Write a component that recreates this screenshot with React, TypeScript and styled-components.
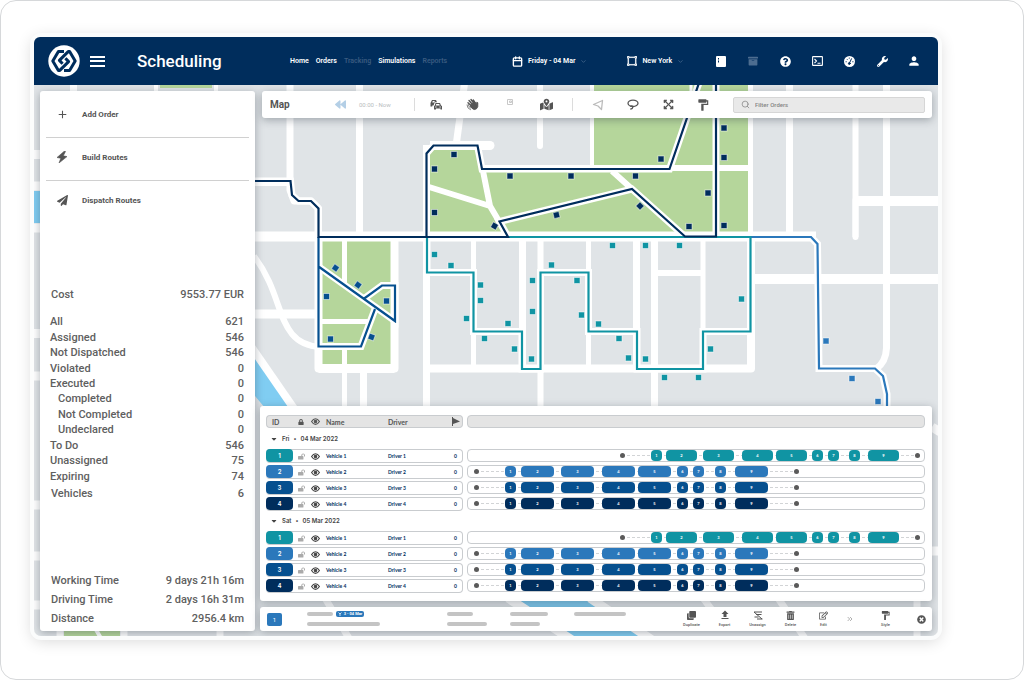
import React from "react";
import styled, { createGlobalStyle, css } from "styled-components";
import {
  FaPaperPlane, FaMapMarkedAlt, FaQuestionCircle, FaWrench, FaLock, FaLockOpen,
  FaTrashAlt, FaRegEdit, FaTimesCircle, FaBackward, FaCaretDown, FaClone,
  FaArchive, FaExpandArrowsAlt,
} from "react-icons/fa";
import { MdFormatPaint, MdAdd, MdUpload, MdPerson } from "react-icons/md";
import { BsBoundingBoxCircles } from "react-icons/bs";
import { Calendar, Search, ChevronsRight, ChevronDown } from "lucide-react";

const navy = "#002d5c";
const teal = "#1094a3";
const blue = "#2b78bb";
const mid = "#06508f";
const ink = "#555";

const Global = createGlobalStyle`
  *, *::before, *::after { box-sizing: border-box; }
  body { margin: 0; background: #fff; font-family: Roboto, "Liberation Sans", sans-serif; color: ${ink}; }
  button, input, select { font: inherit; color: inherit; }
  button { border: 0; padding: 0; background: none; cursor: pointer; }
  a { color: inherit; text-decoration: none; }
  svg { display: block; flex: none; }
`;

const Frame = styled.div`
  min-height: 100vh;
  display: flex;
  padding: 36px 85px 43px 33px;
  border: 1px solid #d6d8da;
  border-radius: 16px;
`;
const Window = styled.main`
  flex: 1;
  min-width: 0;
  display: flex;
  flex-direction: column;
  border-radius: 7px;
  box-shadow: 0 0 0 4px #fbfcfc, 0 3px 16px 2px rgba(0, 0, 0, 0.16);
`;

/* Header */
const Header = styled.header`
  height: 48px;
  display: grid;
  grid-template-columns: 256px 222px 198px 1fr;
  align-items: center;
  background: ${navy};
  border-radius: 6px 6px 0 0;
  color: #fff;
  font-size: 7px;
  font-weight: 600;
`;
const Brand = styled.div`
  display: flex;
  align-items: center;
  padding-left: 14px;
`;
const MenuButton = styled.button`
  width: 15px;
  height: 11px;
  margin: 0 32px 0 10px;
  border-top: 2px solid #fff;
  border-bottom: 2px solid #fff;
  background: linear-gradient(#fff, #fff) center / 100% 2px no-repeat;
`;
const Title = styled.h1`
  margin: 0;
  font-size: 17px;
  line-height: 20px;
  font-weight: 500;
`;
const Nav = styled.nav`
  display: flex;
  gap: 7px;
`;
const NavLink = styled.a<{ $dim?: boolean }>`
  color: ${(p) => (p.$dim ? "#3a5b80" : "#fff")};
`;
const Pickers = styled.div`
  display: flex;
  gap: 40px;
`;
const Picker = styled.button`
  display: flex;
  align-items: center;
  white-space: nowrap;
  gap: 5px;
`;
const Tools = styled.div`
  display: flex;
  justify-content: space-between;
  padding: 0 17px 0 4px;
`;
const IconButton = styled.button<{ $color?: string }>`
  display: flex;
  align-items: center;
  justify-content: center;
  width: 13px;
  height: 13px;
  color: ${(p) => p.$color ?? "inherit"};
`;

/* Workspace: the map with panels over it */
const Stage = styled.div`
  flex: 1;
  position: relative;
  display: grid;
  grid-template-columns: 215px minmax(0, 1fr);
  gap: 5px;
  padding: 6px 6px 5px;
  border-radius: 0 0 7px 7px;
  overflow: hidden;
`;
const MapCanvas = styled.svg`
  position: absolute;
  inset: 0;
  width: 100%;
  height: 100%;
`;
const panel = css`
  position: relative;
  background: #fff;
  border-radius: 3px;
  box-shadow: 0 2px 9px rgba(40, 50, 60, 0.36);
`;
const SidePanel = styled.aside`
  ${panel}
  display: flex;
  flex-direction: column;
  padding: 4px 6px 3px;
`;
const Action = styled.button`
  display: grid;
  grid-template-columns: 32px 1fr;
  align-items: center;
  justify-items: center;
  gap: 4px;
  height: 43px;
  padding-bottom: 4px;
  font-size: 8px;
  font-weight: 700;
  border-bottom: 1px solid #d0d0d0;
  span { justify-self: start; }
  &:last-child { border-color: transparent; }
`;
const Actions = styled.div`
  display: grid;
`;
const Figures = styled.dl<{ $row: number }>`
  display: grid;
  grid-auto-rows: ${(p) => p.$row}px;
  margin: 0 5px;
  font-size: 11px;
  font-weight: 500;
  color: #606060;
  align-items: center;
`;
const Counts = styled(Figures)`
  height: 170px;
  margin: 12px 5px 0 4px;
  grid-auto-rows: 1fr;
`;
const Figure = styled.div<{ $indent?: boolean }>`
  display: flex;
  justify-content: space-between;
  padding-left: ${(p) => (p.$indent ? 8 : 0)}px;
  line-height: 14px;
  dd { margin: 0; }
`;
const CostBlock = styled.div`
  margin: auto 0;
  padding-bottom: 5px;
`;

const Main = styled.div`
  display: flex;
  flex-direction: column;
  min-width: 0;
`;
const MapBar = styled.div`
  ${panel}
  display: flex;
  align-items: center;
  height: 27px;
  margin-left: 2px;
  padding: 0 7px 0 8px;
`;
const MapTitle = styled.h2`
  margin: 0;
  width: 64px;
  font-size: 10px;
  line-height: 14px;
  font-weight: 700;
`;
const Clock = styled.span`
  width: 67px;
  padding-left: 12px;
  font-size: 6px;
  color: #b9bcc0;
`;
const MapTools = styled.div<{ $width: number; $inset: number }>`
  display: flex;
  align-items: center;
  justify-content: space-between;
  flex: 0 1 ${(p) => p.$width}px;
  padding: 0 19px 0 ${(p) => p.$inset}px;
  border-left: 1px solid #dcdcdc;
`;
const SearchBox = styled.label`
  flex: 1;
  display: flex;
  align-items: center;
  gap: 5px;
  height: 16px;
  margin-left: 4px;
  padding: 0 7px;
  background: #e9e9e9;
  border: 1px solid #d6d6d6;
  border-radius: 2px;
  color: #858585;
  input {
    flex: 1;
    min-width: 0;
    padding: 0;
    border: 0;
    outline: 0;
    background: none;
    font-size: 6px;
    font-weight: 500;
  }
  input::placeholder { color: #858585; opacity: 1; }
`;

/* Schedule */
const Schedule = styled.section`
  ${panel}
  margin-top: auto;
  padding: 9px 7px 9px 6px;
  font-family: Lato, "Liberation Sans", sans-serif;
`;
const Table = styled.table`
  display: block;
  thead, tbody { display: block; }
`;
const Row = styled.tr`
  display: grid;
  grid-template-columns: 28px 14px 14px 62px 62px 17px minmax(0, 1fr);
  height: 13px;
  margin-bottom: 3px;
  &:last-child { margin-bottom: 0; }
`;
const Cell = styled.td<{ $first?: boolean; $last?: boolean; $pad?: number }>`
  display: flex;
  align-items: center;
  padding: 0 0 0 ${(p) => p.$pad ?? 0}px;
  border: solid #c9cccf;
  border-width: 1px ${(p) => (p.$last ? 1 : 0)}px 1px ${(p) => (p.$first ? 1 : 0)}px;
  border-radius: ${(p) => (p.$first ? "4px 0 0 4px" : p.$last ? "0 4px 4px 0" : 0)};
  font-size: 5px;
  line-height: 6px;
  font-weight: 700;
  color: ${navy};
  white-space: nowrap;
`;
const HeadCell = styled(Cell)`
  background: #e4e4e4;
  font-size: 7px;
  line-height: 8px;
  color: ${ink};
`;
const IconCell = styled(Cell)<{ $muted?: boolean }>`
  justify-content: center;
  color: ${(p) => (p.$muted ? "#aaa" : "#444")};
`;
const IconHead = styled(HeadCell)`
  justify-content: center;
`;
const TrackCell = styled.td`
  padding: 0 0 0 4px;
`;
const TrackHead = styled.th`
  padding: 0 0 0 4px;
`;
const Track = styled.div<{ $filled?: boolean }>`
  display: flex;
  align-items: center;
  height: 13px;
  border: 1px solid #c9cccf;
  border-radius: 4px;
  background: ${(p) => (p.$filled ? "#e4e4e4" : "#fff")};
`;
const IdCell = styled.td`
  padding: 0;
  border: solid #c9cccf;
  border-width: 1px 0;
  border-radius: 4px 0 0 4px;
`;
const IdTag = styled.div<{ $color: string }>`
  width: 27px;
  height: 13px;
  margin-top: -1px;
  border-radius: 4px;
  background: ${(p) => p.$color};
  color: #fff;
  font-family: Inter, "Liberation Sans", sans-serif;
  font-size: 6px;
  line-height: 13px;
  font-weight: 600;
  text-align: center;
`;
const DateCell = styled.th`
  display: flex;
  align-items: center;
  gap: 4px;
  height: 21px;
  padding: 0 0 0 4px;
  font-family: Inter, "Liberation Sans", sans-serif;
  font-size: 6px;
  line-height: 8px;
  font-weight: 600;
  color: #444;
`;
const DateRow = styled.tr`
  display: block;
`;
const Stop = styled.span<{ $w: number; $color: string }>`
  flex: ${(p) => p.$w} 1 0;
  min-width: 0;
  height: 11px;
  border-radius: 4px;
  background: ${(p) => p.$color};
  color: #fff;
  font-size: 4px;
  line-height: 11px;
  font-weight: 700;
  text-align: center;
`;
const Gap = styled.span<{ $w: number; $line?: boolean }>`
  flex: ${(p) => p.$w} 1 0;
  min-width: 0;
  height: 1px;
  background: ${(p) =>
    p.$line ? "repeating-linear-gradient(90deg, transparent 0 2px, #d2d4d6 2px 5px)" : "none"};
`;
const Depot = styled.span`
  flex: 0 0 5px;
  height: 5px;
  border-radius: 50%;
  background: #5a5a5a;
  box-shadow: 0 0 0 1px #fff;
`;

/* Bottom bar */
const BottomBar = styled.footer`
  ${panel}
  display: flex;
  align-items: center;
  height: 24px;
  margin-top: 6px;
  padding: 0 6px 0 7px;
`;
const RouteButton = styled.button`
  width: 15px;
  height: 13px;
  margin-right: 25px;
  border-radius: 2px;
  background: ${blue};
  color: #fff;
  font-size: 6px;
`;
const Lines = styled.div<{ $w: number }>`
  display: grid;
  align-content: start;
  gap: 4px;
  height: 16px;
  flex: 0 1 ${(p) => p.$w}px;
  min-width: 0;
`;
const LineRow = styled.div`
  display: flex;
  align-items: center;
  gap: 3px;
  height: 6px;
`;
const Line = styled.span<{ $w: number }>`
  width: ${(p) => p.$w}px;
  height: 4px;
  border-radius: 2px;
  background: #c4c4c4;
`;
const Chip = styled.span`
  display: flex;
  align-items: center;
  justify-content: center;
  gap: 2px;
  width: 28px;
  height: 6px;
  border-radius: 2px;
  background: ${blue};
  color: #fff;
  font-size: 4px;
  line-height: 6px;
  font-weight: 700;
  white-space: nowrap;
`;
const Commands = styled.div`
  display: flex;
  margin-left: auto;
  align-items: center;
`;
const Command = styled.button`
  display: grid;
  justify-items: center;
  align-items: center;
  grid-template-rows: 10px 6px;
  gap: 2px;
  width: 33px;
  font-size: 4px;
  line-height: 6px;
  font-weight: 500;
`;
const More = styled.button`
  width: 19px;
  margin-right: 10px;
  display: grid;
  justify-items: center;
  color: #888;
`;
const Close = styled.button`
  margin-left: 15px;
`;

const Logo = () => (
  <svg width="32" height="32" viewBox="-16 -16 32 32" aria-label="Logo">
    <circle r="15.7" fill="#fff" />
    <g fill="none" stroke={navy} strokeWidth="3" strokeLinejoin="round">
      <path d="M0-9.6H-5.6L-11.2 0-5.6 9.4H-4.2L4.6.6 1.400-2.800" />
      <path d="M0 9.6H5.6L11.2 0 5.6-9.4H4.2L-4.6-.6-1.400 2.800" />
    </g>
  </svg>
);

const Cars = () => (
  <svg width="12" height="11" viewBox="0 0 24 22" fill="currentColor">
    <path fillRule="evenodd" d="M4 2h8l2 4.500H9.500L7 13H4.500v2H1V8zM5.500 4L4.500 7h4l1-3z" />
    <path fillRule="evenodd" d="M11 8h9l2 5 2 1v7h-3v-2h-9v2H8v-7l1.500-1zM12.500 10l-1 3h8l-1-3zM10.500 15v2h2.500v-2zM19 15v2h2.500v-2z" />
  </svg>
);

const Hand = () => (
  <svg width="13" height="13" viewBox="0 0 26 26" fill="none" stroke="currentColor" strokeWidth="2.800" strokeLinecap="round">
    <path d="M13 13L6 5M16 11L10 3M18.500 10L14.500 4M11 16L4 9.500" />
    <path d="M11 11.500L18 8.500 21.500 13V8.500L23.500 9.500V17Q22 23 16.500 23 12 22 9 17z" fill="currentColor" strokeWidth="2" strokeLinejoin="round" />
    <path d="M2 14Q2 21 9 23.500M4.500 13Q5 18 9.500 20.500" strokeWidth="1.500" />
  </svg>
);

const Ledger = () => (
  <svg width="10" height="12" viewBox="0 0 10 12">
    <rect x="0" y="1" width="10" height="11" rx="1" fill="#fff" />
    <path d="M2.500 3v1.500M2.500 5.500v2" stroke={navy} strokeWidth="1" />
  </svg>
);

const Terminal = () => (
  <svg width="11" height="10" viewBox="0 0 22 20" fill="none" stroke="currentColor" strokeWidth="2.200">
    <rect x="1.200" y="1.200" width="19.600" height="17.600" rx="1" />
    <path d="M5 6l4 4-4 4M11 14.500h6" />
  </svg>
);

const Gauge = () => (
  <svg width="11" height="11" viewBox="0 0 22 22">
    <circle cx="11" cy="11" r="11" fill="currentColor" />
    <g stroke={navy} strokeWidth="2" strokeLinecap="round" fill={navy}>
      <path d="M15 5.500L11 14" />
      <circle cx="10.600" cy="15" r="1.800" />
      <path d="M4 11.500h.6M6 6.500l.4.400M10.500 4v.5M17.500 11.500h.6" />
    </g>
  </svg>
);

const Bolt = () => (
  <svg width="12" height="12" viewBox="0 0 12 12" fill="currentColor">
    <path d="M8.500 0L1 6.500 4.800 7.300 3 12 11 5.600 7.300 4.800 9.500.500z" stroke="currentColor" strokeWidth=".6" />
  </svg>
);

const Eye = () => (
  <svg width="9" height="7" viewBox="0 0 16 12" fill="none" stroke="currentColor" strokeWidth="2">
    <path d="M1 6Q4 1 8 1t7 5q-3 5-7 5T1 6z" />
    <circle cx="8" cy="6" r="2.200" fill="currentColor" />
  </svg>
);

const Pennant = () => (
  <svg width="8" height="9" viewBox="0 0 8 9">
    <path d="M.5 0v9" stroke="currentColor" />
    <path d="M1 1L8 4.500 1 7z" fill="currentColor" />
  </svg>
);

const SendOutline = () => (
  <svg width="12" height="12" viewBox="0 0 12 12" fill="none" stroke="currentColor" strokeWidth="1.300" strokeLinejoin="round">
    <path d="M10.500 1.500L1.500 5.500 6 7 9.500 10.500z" />
  </svg>
);

const LassoIcon = () => (
  <svg width="12" height="11" viewBox="0 0 12 11" fill="none" stroke="currentColor" strokeWidth="1.300" strokeLinecap="round">
    <ellipse cx="6" cy="4.300" rx="5" ry="3.200" />
    <path d="M3.500 7.200Q6 6.500 5.800 8.200T3.800 10" />
  </svg>
);

const NoteIcon = () => (
  <svg width="6" height="12" viewBox="0 0 6 12" fill="none" stroke="currentColor">
    <path d="M.5.500h5v5h-5zM2.500 2h2v1.500h-2z" />
  </svg>
);

const Unassign = () => (
  <svg width="10" height="9" viewBox="0 0 20 18" fill="none" stroke="currentColor" strokeWidth="2">
    <path d="M2 2h16M6 7h11M3 12h8M8 16h11M2 2l16 14" />
  </svg>
);

const Branch = () => (
  <svg width="4" height="4" viewBox="0 0 8 8" fill="none" stroke="currentColor" strokeWidth="1.500">
    <path d="M1 1l3 3 3-3M4 4v4" />
  </svg>
);

/* Streets: path data and stroke width */
const streets: [string, number][] = [
  ["M290 80V190L294 201H311L318 208V237", 7],
  ["M254 182H290", 8],
  ["M254 236.500H816", 10],
  ["M359.500 80V236", 7],
  ["M465 80L456 146", 7],
  ["M430 145.500H490", 9],
  ["M540 80V146", 6],
  ["M592 80V168", 4],
  ["M482 168H750", 6],
  ["M750.500 80V240", 5],
  ["M789.500 80V236", 7],
  ["M855.500 80V237", 6],
  ["M886.500 80V348Q886 362 876 369", 7],
  ["M858 201H940", 10],
  ["M752 279H940", 10],
  ["M318.500 236V368.500H394.500V236", 8],
  ["M318.500 368.500H394.500", 9],
  ["M254 314H318", 9],
  ["M254 256C278 288 277 316 292 334Q302 346 320 347", 6],
  ["M344.500 368V410", 5],
  ["M363.500 368V410", 7],
  ["M426.500 145V410", 7],
  ["M423 368.500H751V236", 8],
  ["M473.500 238V368", 5],
  ["M522.500 238V368", 7],
  ["M540.500 238V410", 6],
  ["M588.500 238V368", 5],
  ["M636.500 238V368", 7],
  ["M654.500 238V410", 7],
  ["M703 238V368", 5],
  ["M654 273H703", 6],
  ["M588.500 331.500H637M703 332H751", 6],
  ["M73.500 80V95", 7],
  ["M34 154.500H45M34 186H45M34 228H45M34 333.500H45M34 376H45M34 505H45M34 556H45M34 605H45", 9],
  ["M932 427L940 432M928 551H940", 9],
  ["M250 345L306 426", 8],
  ["M508 598L572 640M590 598L652 640", 9],
  ["M325 598L350 640M703 598L712 610M778 598L806 640M917 598V640", 7],
  ["M60 628V640M124 628V640M220 628V640", 7],
];

const routes: [string, string][] = [
  [blue, "M750 237H811L817.500 244L819 368.500H875L883 376L887 394V410"],
  [teal, "M508 237H750.500V331.500H703V369H637V331.500H588.500V272.500H540.500V369H522V331.500H473.500V272.500H427V237"],
  [mid, "M318.500 237V346.500H361L375 309M318.500 266.500L395 321V285.500H382L363.500 299"],
  [navy, "M254 181H290.500L292 195L298.500 201H311L318.500 208.500V237H508L499.500 221.500L632 189L685 236.500H716V80M426.500 237V153.500L433.500 145.500H477.500L482 169H669.500L700 80"],
];

const stops: [string, [number, number, number?][]][] = [
  [navy, [[454, 154.5], [434.5, 169], [434.5, 212.5], [510, 176], [571, 176], [494.5, 226, 30], [556.5, 215, -14], [661, 159], [635.5, 176], [640, 206, 45], [708, 193], [689, 226.5], [724, 128], [724, 157.5], [724, 225.5]]],
  [mid, [[335.5, 268, 35], [358, 285, 35], [326.5, 296.5], [386.5, 301], [330.5, 339], [371.5, 337, 20]]],
  [teal, [[434.5, 254.5], [451, 265.5], [480.5, 285], [480.5, 300.5], [466.5, 318.5], [508, 323.5], [484.5, 338.5], [514.5, 349], [531.5, 359], [532.5, 280.5], [532.5, 311.5], [551.5, 265], [577, 280.5], [581.5, 315], [598.5, 324], [619, 338.5], [628.5, 358], [645.5, 359], [612.5, 245.5], [645.5, 245.5], [679.5, 245.5], [741.5, 299], [710.5, 349], [664.5, 377.5], [698.5, 377.5]]],
  [blue, [[826, 341], [852, 378.5], [878, 401.5]]],
];

const CityMap = () => (
  <MapCanvas viewBox="34 85 904 551" preserveAspectRatio="xMidYMid slice" aria-label="Map of routes">
    <rect x="-400" y="-400" width="1900" height="1600" fill="#e0e4e7" />
    <g fill="#80cdf2">
      <path d="M250 345L300 420H275L250 390ZM34 191H45V223H34ZM513 598H584L650 640H575Z" />
    </g>
    <g fill="#b5d69b">
      <path d="M594 80H748V165H594ZM430 150H478L482 171H748V236H430ZM322 240H392V365H322ZM160 80H212V88H160ZM64 628H120V640H64Z" />
    </g>
    <g fill="none" stroke="#fff" strokeLinejoin="round">
      {streets.map(([d, w]) => <path key={d} d={d} strokeWidth={w} />)}
      <path strokeWidth="5" d="M344.500 240V284M344.500 345V368M320 321.500H370" />
      <path strokeWidth="6" d="M429 187L490 206L500 223M490 206L483 171M612 171L632 189" />
      <path strokeWidth="9" strokeLinecap="round" d="M480 145.500H490" />
      <path strokeWidth="6" strokeLinecap="round" d="M540 120V146M855.500 200V237" />
      <path strokeWidth="3" d="M691 80V92" />
      <path strokeWidth="4" d="M95 628L102 640M156 80V95M216 80V95" />
    </g>
    <g fill="none" stroke="#fff" strokeWidth="7">
      {routes.map(([, d]) => <path key={d} d={d} />)}
    </g>
    <g fill="none" strokeWidth="2.200">
      {routes.map(([c, d]) => <path key={d} d={d} stroke={c} />)}
    </g>
    {stops.map(([color, points]) => (
      <g key={color} fill={color} stroke="#fff" strokeOpacity="0.500" strokeWidth="1">
        {points.map(([x, y, r]) => (
          <rect key={`${x}-${y}`} x={x - 3} y={y - 3} width="6" height="6" transform={`rotate(${r ?? 0} ${x} ${y})`} />
        ))}
      </g>
    ))}
  </MapCanvas>
);

/* Durations of a day plan: gap before each stop, then the stop itself */
const plans = {
  late: { lead: 152, legs: [[26, 11], [4, 31], [6, 31], [8, 31], [3, 31], [5, 11], [5, 11], [10, 11], [8, 31]], back: 16, rest: 4 },
  early: { lead: 6, legs: [[26, 11], [5, 33], [7, 33], [8, 33], [3, 33], [6, 11], [5, 11], [11, 11], [9, 33]], back: 26, rest: 125 },
};
const vehicles = [
  { id: 1, color: teal, plan: plans.late },
  { id: 2, color: blue, plan: plans.early },
  { id: 3, color: mid, plan: plans.early },
  { id: 4, color: navy, plan: plans.early },
];

const VehicleRow = ({ id, color, plan }: (typeof vehicles)[number]) => (
  <Row>
    <IdCell><IdTag $color={color}>{id}</IdTag></IdCell>
    <IconCell $muted><FaLockOpen size={7} /></IconCell>
    <IconCell><Eye /></IconCell>
    <Cell $pad={4}>Vehicle {id}</Cell>
    <Cell $pad={4}>Driver {id}</Cell>
    <Cell $last $pad={8}>0</Cell>
    <TrackCell>
      <Track>
        <Gap $w={plan.lead} />
        <Depot />
        {plan.legs.map(([gap, length], i) => (
          <React.Fragment key={i}>
            <Gap $w={gap} $line />
            <Stop $w={length} $color={color}>{i + 1}</Stop>
          </React.Fragment>
        ))}
        <Gap $w={plan.back} $line />
        <Depot />
        <Gap $w={plan.rest} />
      </Track>
    </TrackCell>
  </Row>
);

const counts: [string, number, boolean?][] = [
  ["All", 621], ["Assigned", 546], ["Not Dispatched", 546], ["Violated", 0], ["Executed", 0],
  ["Completed", 0, true], ["Not Completed", 0, true], ["Undeclared", 0, true],
  ["To Do", 546], ["Unassigned", 75], ["Expiring", 74],
];

export default function App() {
  return (
    <Frame>
      <Global />
      <Window>
        <Header>
          <Brand>
            <Logo />
            <MenuButton aria-label="Menu" />
            <Title>Scheduling</Title>
          </Brand>
          <Nav>
            <NavLink href="#home">Home</NavLink>
            <NavLink href="#orders">Orders</NavLink>
            <NavLink href="#tracking" $dim>Tracking</NavLink>
            <NavLink href="#simulations">Simulations</NavLink>
            <NavLink href="#reports" $dim>Reports</NavLink>
          </Nav>
          <Pickers>
            <Picker><Calendar size={11} strokeWidth={3} />Friday - 04 Mar<ChevronDown size={7} color="#5d7b9b" /></Picker>
            <Picker><BsBoundingBoxCircles size={10} stroke="#fff" strokeWidth={1} />New York<ChevronDown size={7} color="#5d7b9b" /></Picker>
          </Pickers>
          <Tools>
            <IconButton aria-label="Ledger"><Ledger /></IconButton>
            <IconButton aria-label="Archive" $color="#4d6d90"><FaArchive size={10} /></IconButton>
            <IconButton aria-label="Help"><FaQuestionCircle size={11} /></IconButton>
            <IconButton aria-label="Console"><Terminal /></IconButton>
            <IconButton aria-label="Dashboard"><Gauge /></IconButton>
            <IconButton aria-label="Settings"><FaWrench size={11} /></IconButton>
            <IconButton aria-label="Account"><MdPerson size={14} /></IconButton>
          </Tools>
        </Header>
        <Stage>
          <CityMap />
          <SidePanel>
            <Actions>
              <Action><MdAdd size={13} /><span>Add Order</span></Action>
              <Action><Bolt /><span>Build Routes</span></Action>
              <Action><FaPaperPlane size={11} /><span>Dispatch Routes</span></Action>
            </Actions>
            <CostBlock>
              <Figures $row={16}>
                <Figure><dt>Cost</dt><dd>9553.77 EUR</dd></Figure>
              </Figures>
              <Counts $row={15}>
                {counts.map(([name, value, indent]) => (
                  <Figure key={name} $indent={indent}><dt>{name}</dt><dd>{value}</dd></Figure>
                ))}
              </Counts>
              <Figures $row={19}>
                <Figure><dt>Vehicles</dt><dd>6</dd></Figure>
              </Figures>
            </CostBlock>
            <Figures $row={19}>
              <Figure><dt>Working Time</dt><dd>9 days 21h 16m</dd></Figure>
              <Figure><dt>Driving Time</dt><dd>2 days 16h 31m</dd></Figure>
              <Figure><dt>Distance</dt><dd>2956.4 km</dd></Figure>
            </Figures>
          </SidePanel>
          <Main>
            <MapBar>
              <MapTitle>Map</MapTitle>
              <IconButton aria-label="Rewind" $color="#b4cfe6"><FaBackward size={11} /></IconButton>
              <Clock>00:00 - Now</Clock>
              <MapTools $width={158} $inset={14}>
                <IconButton aria-label="Traffic"><Cars /></IconButton>
                <IconButton aria-label="Pan"><Hand /></IconButton>
                <IconButton aria-label="Note" $color="#c8c8c8"><NoteIcon /></IconButton>
                <IconButton aria-label="Pins"><FaMapMarkedAlt size={13} /></IconButton>
              </MapTools>
              <MapTools $width={157} $inset={18}>
                <IconButton aria-label="Send" $color="#bbb"><SendOutline /></IconButton>
                <IconButton aria-label="Lasso"><LassoIcon /></IconButton>
                <IconButton aria-label="Zoom to fit"><FaExpandArrowsAlt size={11} /></IconButton>
                <IconButton aria-label="Style"><MdFormatPaint size={14} /></IconButton>
              </MapTools>
              <SearchBox>
                <Search size={9} />
                <input type="text" placeholder="Filter Orders" aria-label="Filter Orders" />
              </SearchBox>
            </MapBar>
            <Schedule>
              <Table>
                <thead>
                  <Row>
                    <HeadCell as="th" $first $pad={5}>ID</HeadCell>
                    <IconHead as="th"><FaLock size={6} /></IconHead>
                    <IconHead as="th"><Eye /></IconHead>
                    <HeadCell as="th" $pad={4}>Name</HeadCell>
                    <HeadCell as="th" $pad={4}>Driver</HeadCell>
                    <IconHead as="th" $last $pad={3}><Pennant /></IconHead>
                    <TrackHead><Track $filled /></TrackHead>
                  </Row>
                </thead>
                {[["Fri", "04 Mar 2022"], ["Sat", "05 Mar 2022"]].map(([day, date]) => (
                  <tbody key={day}>
                    <DateRow>
                      <DateCell><FaCaretDown size={8} /><span>{day}</span><span>•</span><span>{date}</span></DateCell>
                    </DateRow>
                    {vehicles.map((v) => <VehicleRow key={v.id} {...v} />)}
                  </tbody>
                ))}
              </Table>
            </Schedule>
            <BottomBar>
              <RouteButton>1</RouteButton>
              <Lines $w={140}>
                <LineRow><Line $w={26} /><Chip><Branch />3 - 04 Mar</Chip></LineRow>
                <LineRow><Line $w={73} /></LineRow>
              </Lines>
              <Lines $w={63}>
                <LineRow><Line $w={26} /></LineRow>
                <LineRow><Line $w={40} /></LineRow>
              </Lines>
              <Lines $w={64}>
                <LineRow><Line $w={38} /></LineRow>
                <LineRow><Line $w={30} /></LineRow>
              </Lines>
              <Lines $w={52}>
                <LineRow><Line $w={52} /></LineRow>
              </Lines>
              <Commands>
                <Command><FaClone size={9} />Duplicate</Command>
                <Command><MdUpload size={12} />Export</Command>
                <Command><Unassign />Unassign</Command>
                <Command><FaTrashAlt size={9} />Delete</Command>
                <Command><FaRegEdit size={9} />Edit</Command>
                <More aria-label="More"><ChevronsRight size={8} /></More>
                <Command><MdFormatPaint size={11} />Style</Command>
                <Close aria-label="Close"><FaTimesCircle size={9} /></Close>
              </Commands>
            </BottomBar>
          </Main>
        </Stage>
      </Window>
    </Frame>
  );
}
